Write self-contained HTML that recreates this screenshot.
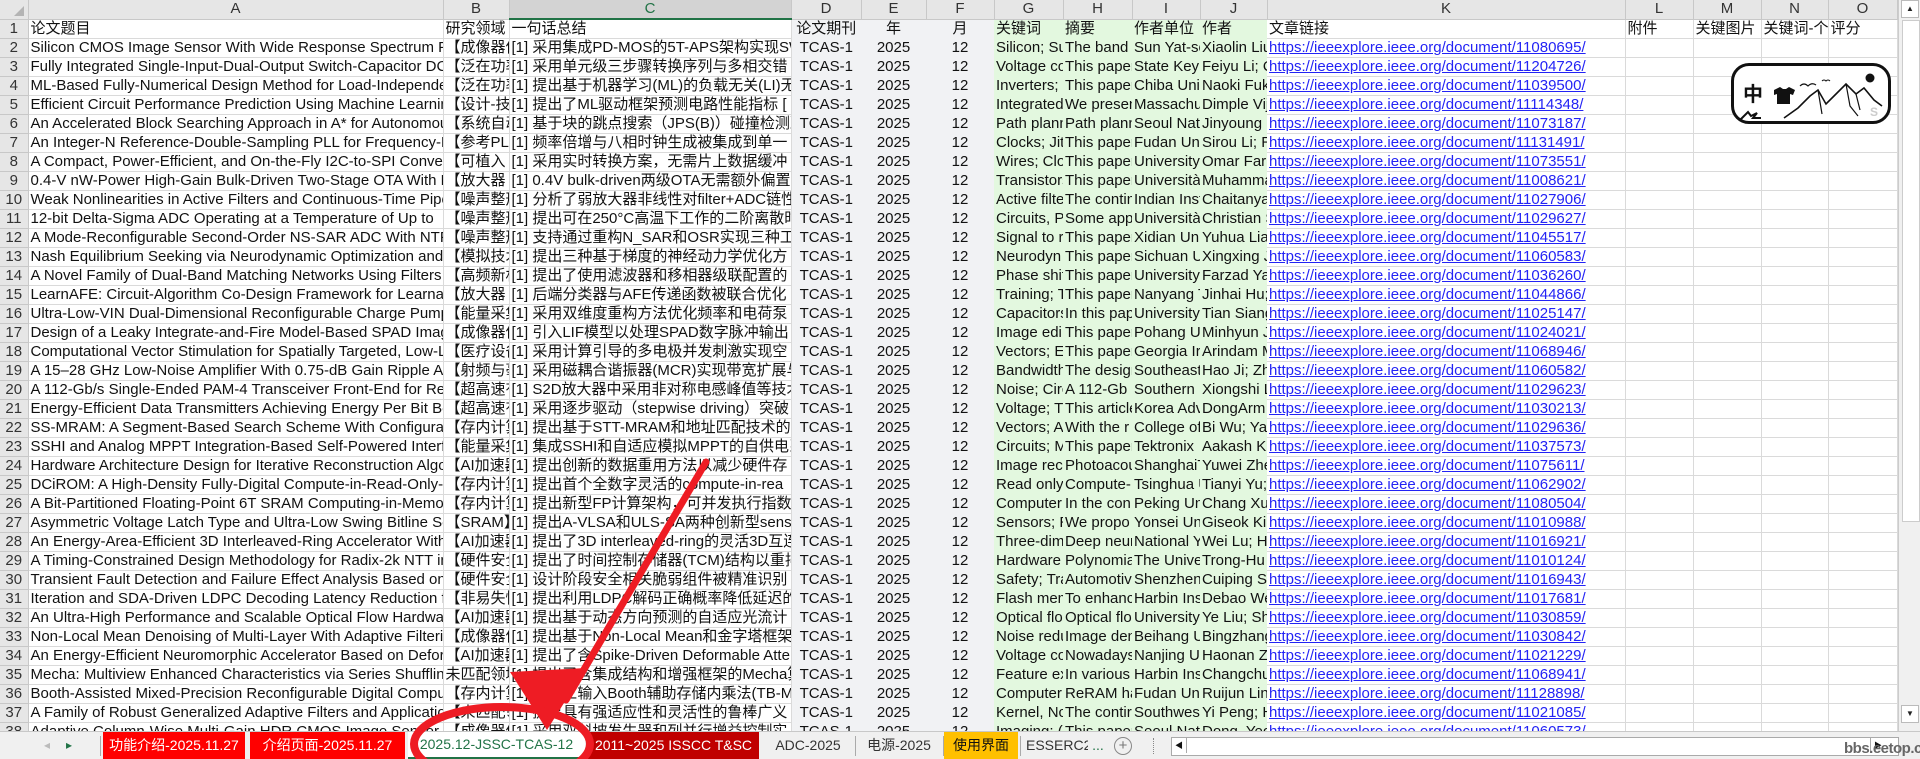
<!DOCTYPE html>
<html><head><meta charset="utf-8">
<style>
html,body{margin:0;padding:0;width:1920px;height:759px;overflow:hidden;background:#fff;}
body{font-family:"Liberation Sans","Noto Sans CJK SC",sans-serif;font-size:15px;color:#111;position:relative;}
table{border-collapse:collapse;table-layout:fixed;position:absolute;left:0;top:0;width:1897px;}
td{height:18px;padding:0 2px;white-space:nowrap;overflow:hidden;border-right:1px solid #dadada;border-bottom:1px solid #dadada;line-height:18px;}
tr.h td{background:#e6e6e6;color:#333;text-align:center;border-color:#c8c8c8;}
tr.h td.sel{background:#d3d3d3;color:#217346;border-bottom:2px solid #217346;}
td.n{background:#e6e6e6;color:#333;text-align:center;border-color:#c8c8c8;padding:0;}
td.d{background:#f1f2f4;border-right:none;border-bottom:1px solid #f1f2f4;text-align:center;}
td.g{background:#e3f8df;border-right:none;border-bottom:1px solid #e3f8df;}
td.k a{color:#2323f5;text-decoration:underline;}
tr.h td.d,tr.h td.g{background:#e6e6e6;border-right:1px solid #c8c8c8;border-bottom:1px solid #c8c8c8;}
#vs{position:absolute;left:1898px;top:0;width:22px;height:731px;background:#f0f0f0;border-left:1px solid #ccc;}
#tabs{position:absolute;left:0;top:731px;width:1920px;height:28px;background:#f0f0f0;border-top:1px solid #c8c8c8;font-size:14px;}
.t{position:absolute;top:0;height:27px;line-height:27px;text-align:center;white-space:nowrap;overflow:hidden;}
.sep{position:absolute;top:4px;width:1px;height:20px;background:#aaa;}
</style></head><body>
<table>
<colgroup><col style="width:28px"><col style="width:415px"><col style="width:66px"><col style="width:282px"><col style="width:70px"><col style="width:65px"><col style="width:68px"><col style="width:69px"><col style="width:69px"><col style="width:68px"><col style="width:67px"><col style="width:358px"><col style="width:68px"><col style="width:68px"><col style="width:67px"><col style="width:69px"></colgroup>
<tr class="h"><td></td><td>A</td><td>B</td><td class="sel">C</td><td class="d">D</td><td class="d">E</td><td class="d">F</td><td class="g">G</td><td class="g">H</td><td class="g">I</td><td class="g">J</td><td>K</td><td>L</td><td>M</td><td>N</td><td>O</td></tr>
<tr><td class="n">1</td><td>论文题目</td><td>研究领域</td><td>一句话总结</td><td class="d">论文期刊</td><td class="d">年</td><td class="d">月</td><td class="g">关键词</td><td class="g">摘要</td><td class="g">作者单位</td><td class="g">作者</td><td>文章链接</td><td>附件</td><td>关键图片</td><td>关键词-个</td><td>评分</td></tr>
<tr><td class="n">2</td><td>Silicon CMOS Image Sensor With Wide Response Spectrum From</td><td>【成像器件</td><td>[1] 采用集成PD-MOS的5T-APS架构实现SW</td><td class="d">TCAS-1</td><td class="d">2025</td><td class="d">12</td><td class="g">Silicon; Su</td><td class="g">The band</td><td class="g">Sun Yat-se</td><td class="g">Xiaolin Liu</td><td class="k"><a>https://ieeexplore.ieee.org/document/11080695/</a></td><td></td><td></td><td></td><td></td></tr>
<tr><td class="n">3</td><td>Fully Integrated Single-Input-Dual-Output Switch-Capacitor DC</td><td>【泛在功率</td><td>[1] 采用单元级三步骤转换序列与多相交错</td><td class="d">TCAS-1</td><td class="d">2025</td><td class="d">12</td><td class="g">Voltage co</td><td class="g">This paper</td><td class="g">State Key</td><td class="g">Feiyu Li; Q</td><td class="k"><a>https://ieeexplore.ieee.org/document/11204726/</a></td><td></td><td></td><td></td><td></td></tr>
<tr><td class="n">4</td><td>ML-Based Fully-Numerical Design Method for Load-Independent</td><td>【泛在功率</td><td>[1] 提出基于机器学习(ML)的负载无关(LI)无</td><td class="d">TCAS-1</td><td class="d">2025</td><td class="d">12</td><td class="g">Inverters; </td><td class="g">This paper</td><td class="g">Chiba Univ</td><td class="g">Naoki Fuk</td><td class="k"><a>https://ieeexplore.ieee.org/document/11039500/</a></td><td></td><td></td><td></td><td></td></tr>
<tr><td class="n">5</td><td>Efficient Circuit Performance Prediction Using Machine Learning:</td><td>【设计-技</td><td>[1] 提出了ML驱动框架预测电路性能指标 [</td><td class="d">TCAS-1</td><td class="d">2025</td><td class="d">12</td><td class="g">Integrated</td><td class="g">We presen</td><td class="g">Massachus</td><td class="g">Dimple Vij</td><td class="k"><a>https://ieeexplore.ieee.org/document/11114348/</a></td><td></td><td></td><td></td><td></td></tr>
<tr><td class="n">6</td><td>An Accelerated Block Searching Approach in A* for Autonomous</td><td>【系统自动</td><td>[1] 基于块的跳点搜索（JPS(B)）碰撞检测减</td><td class="d">TCAS-1</td><td class="d">2025</td><td class="d">12</td><td class="g">Path plann</td><td class="g">Path plann</td><td class="g">Seoul Nat</td><td class="g">Jinyoung S</td><td class="k"><a>https://ieeexplore.ieee.org/document/11073187/</a></td><td></td><td></td><td></td><td></td></tr>
<tr><td class="n">7</td><td>An Integer-N Reference-Double-Sampling PLL for Frequency-M</td><td>【参考PLL</td><td>[1] 频率倍增与八相时钟生成被集成到单一</td><td class="d">TCAS-1</td><td class="d">2025</td><td class="d">12</td><td class="g">Clocks; Jitt</td><td class="g">This paper</td><td class="g">Fudan Uni</td><td class="g">Sirou Li; R</td><td class="k"><a>https://ieeexplore.ieee.org/document/11131491/</a></td><td></td><td></td><td></td><td></td></tr>
<tr><td class="n">8</td><td>A Compact, Power-Efficient, and On-the-Fly I2C-to-SPI Conver</td><td>【可植入</td><td>[1] 采用实时转换方案，无需片上数据缓冲</td><td class="d">TCAS-1</td><td class="d">2025</td><td class="d">12</td><td class="g">Wires; Clo</td><td class="g">This paper</td><td class="g">University</td><td class="g">Omar Faru</td><td class="k"><a>https://ieeexplore.ieee.org/document/11073551/</a></td><td></td><td></td><td></td><td></td></tr>
<tr><td class="n">9</td><td>0.4-V nW-Power High-Gain Bulk-Driven Two-Stage OTA With N</td><td>【放大器</td><td>[1] 0.4V bulk-driven两级OTA无需额外偏置</td><td class="d">TCAS-1</td><td class="d">2025</td><td class="d">12</td><td class="g">Transistors</td><td class="g">This paper</td><td class="g">Università</td><td class="g">Muhamma</td><td class="k"><a>https://ieeexplore.ieee.org/document/11008621/</a></td><td></td><td></td><td></td><td></td></tr>
<tr><td class="n">10</td><td>Weak Nonlinearities in Active Filters and Continuous-Time Pipel</td><td>【噪声整形</td><td>[1] 分析了弱放大器非线性对filter+ADC链性</td><td class="d">TCAS-1</td><td class="d">2025</td><td class="d">12</td><td class="g">Active filte</td><td class="g">The contin</td><td class="g">Indian Inst</td><td class="g">Chaitanya</td><td class="k"><a>https://ieeexplore.ieee.org/document/11027906/</a></td><td></td><td></td><td></td><td></td></tr>
<tr><td class="n">11</td><td>12-bit Delta-Sigma ADC Operating at a Temperature of Up to</td><td>【噪声整形</td><td>[1] 提出可在250°C高温下工作的二阶离散时</td><td class="d">TCAS-1</td><td class="d">2025</td><td class="d">12</td><td class="g">Circuits, Po</td><td class="g">Some app</td><td class="g">Università</td><td class="g">Christian S</td><td class="k"><a>https://ieeexplore.ieee.org/document/11029627/</a></td><td></td><td></td><td></td><td></td></tr>
<tr><td class="n">12</td><td>A Mode-Reconfigurable Second-Order NS-SAR ADC With NTF</td><td>【噪声整形</td><td>[1] 支持通过重构N_SAR和OSR实现三种工作</td><td class="d">TCAS-1</td><td class="d">2025</td><td class="d">12</td><td class="g">Signal to r</td><td class="g">This paper</td><td class="g">Xidian Uni</td><td class="g">Yuhua Lian</td><td class="k"><a>https://ieeexplore.ieee.org/document/11045517/</a></td><td></td><td></td><td></td><td></td></tr>
<tr><td class="n">13</td><td>Nash Equilibrium Seeking via Neurodynamic Optimization and A</td><td>【模拟技术</td><td>[1] 提出三种基于梯度的神经动力学优化方</td><td class="d">TCAS-1</td><td class="d">2025</td><td class="d">12</td><td class="g">Neurodyn</td><td class="g">This paper</td><td class="g">Sichuan U</td><td class="g">Xingxing J</td><td class="k"><a>https://ieeexplore.ieee.org/document/11060583/</a></td><td></td><td></td><td></td><td></td></tr>
<tr><td class="n">14</td><td>A Novel Family of Dual-Band Matching Networks Using Filters a</td><td>【高频新材</td><td>[1] 提出了使用滤波器和移相器级联配置的</td><td class="d">TCAS-1</td><td class="d">2025</td><td class="d">12</td><td class="g">Phase shift</td><td class="g">This paper</td><td class="g">University</td><td class="g">Farzad Ya</td><td class="k"><a>https://ieeexplore.ieee.org/document/11036260/</a></td><td></td><td></td><td></td><td></td></tr>
<tr><td class="n">15</td><td>LearnAFE: Circuit-Algorithm Co-Design Framework for Learnab</td><td>【放大器</td><td>[1] 后端分类器与AFE传递函数被联合优化</td><td class="d">TCAS-1</td><td class="d">2025</td><td class="d">12</td><td class="g">Training; T</td><td class="g">This paper</td><td class="g">Nanyang T</td><td class="g">Jinhai Hu; </td><td class="k"><a>https://ieeexplore.ieee.org/document/11044866/</a></td><td></td><td></td><td></td><td></td></tr>
<tr><td class="n">16</td><td>Ultra-Low-VIN Dual-Dimensional Reconfigurable Charge Pump</td><td>【能量采集</td><td>[1] 采用双维度重构方法优化频率和电荷泵</td><td class="d">TCAS-1</td><td class="d">2025</td><td class="d">12</td><td class="g">Capacitors</td><td class="g">In this pap</td><td class="g">University</td><td class="g">Tian Siang</td><td class="k"><a>https://ieeexplore.ieee.org/document/11025147/</a></td><td></td><td></td><td></td><td></td></tr>
<tr><td class="n">17</td><td>Design of a Leaky Integrate-and-Fire Model-Based SPAD Imag</td><td>【成像器件</td><td>[1] 引入LIF模型以处理SPAD数字脉冲输出</td><td class="d">TCAS-1</td><td class="d">2025</td><td class="d">12</td><td class="g">Image edi</td><td class="g">This paper</td><td class="g">Pohang U</td><td class="g">Minhyun J</td><td class="k"><a>https://ieeexplore.ieee.org/document/11024021/</a></td><td></td><td></td><td></td><td></td></tr>
<tr><td class="n">18</td><td>Computational Vector Stimulation for Spatially Targeted, Low-L</td><td>【医疗设备</td><td>[1] 采用计算引导的多电极并发刺激实现空</td><td class="d">TCAS-1</td><td class="d">2025</td><td class="d">12</td><td class="g">Vectors; E</td><td class="g">This paper</td><td class="g">Georgia Ir</td><td class="g">Arindam M</td><td class="k"><a>https://ieeexplore.ieee.org/document/11068946/</a></td><td></td><td></td><td></td><td></td></tr>
<tr><td class="n">19</td><td>A 15–28 GHz Low-Noise Amplifier With 0.75-dB Gain Ripple A</td><td>【射频与毫</td><td>[1] 采用磁耦合谐振器(MCR)实现带宽扩展与</td><td class="d">TCAS-1</td><td class="d">2025</td><td class="d">12</td><td class="g">Bandwidth</td><td class="g">The design</td><td class="g">Southeast</td><td class="g">Hao Ji; Zhi</td><td class="k"><a>https://ieeexplore.ieee.org/document/11060582/</a></td><td></td><td></td><td></td><td></td></tr>
<tr><td class="n">20</td><td>A 112-Gb/s Single-Ended PAM-4 Transceiver Front-End for Re</td><td>【超高速有</td><td>[1] S2D放大器中采用非对称电感峰值等技术</td><td class="d">TCAS-1</td><td class="d">2025</td><td class="d">12</td><td class="g">Noise; Circ</td><td class="g">A 112-Gb</td><td class="g">Southern U</td><td class="g">Xiongshi L</td><td class="k"><a>https://ieeexplore.ieee.org/document/11029623/</a></td><td></td><td></td><td></td><td></td></tr>
<tr><td class="n">21</td><td>Energy-Efficient Data Transmitters Achieving Energy Per Bit Bey</td><td>【超高速有</td><td>[1] 采用逐步驱动（stepwise driving）突破</td><td class="d">TCAS-1</td><td class="d">2025</td><td class="d">12</td><td class="g">Voltage; T</td><td class="g">This article</td><td class="g">Korea Adv</td><td class="g">DongArm</td><td class="k"><a>https://ieeexplore.ieee.org/document/11030213/</a></td><td></td><td></td><td></td><td></td></tr>
<tr><td class="n">22</td><td>SS-MRAM: A Segment-Based Search Scheme With Configurabl</td><td>【存内计算</td><td>[1] 提出基于STT-MRAM和地址匹配技术的</td><td class="d">TCAS-1</td><td class="d">2025</td><td class="d">12</td><td class="g">Vectors; A</td><td class="g">With the r</td><td class="g">College of</td><td class="g">Bi Wu; Yar</td><td class="k"><a>https://ieeexplore.ieee.org/document/11029636/</a></td><td></td><td></td><td></td><td></td></tr>
<tr><td class="n">23</td><td>SSHI and Analog MPPT Integration-Based Self-Powered Interfa</td><td>【能量采集</td><td>[1] 集成SSHI和自适应模拟MPPT的自供电系</td><td class="d">TCAS-1</td><td class="d">2025</td><td class="d">12</td><td class="g">Circuits; M</td><td class="g">This paper</td><td class="g">Tektronix</td><td class="g">Aakash Ku</td><td class="k"><a>https://ieeexplore.ieee.org/document/11037573/</a></td><td></td><td></td><td></td><td></td></tr>
<tr><td class="n">24</td><td>Hardware Architecture Design for Iterative Reconstruction Algo</td><td>【AI加速器</td><td>[1] 提出创新的数据重用方法以减少硬件存</td><td class="d">TCAS-1</td><td class="d">2025</td><td class="d">12</td><td class="g">Image rec</td><td class="g">Photoacou</td><td class="g">ShanghaiT</td><td class="g">Yuwei Zhe</td><td class="k"><a>https://ieeexplore.ieee.org/document/11075611/</a></td><td></td><td></td><td></td><td></td></tr>
<tr><td class="n">25</td><td>DCiROM: A High-Density Fully-Digital Compute-in-Read-Only-</td><td>【存内计算</td><td>[1] 提出首个全数字灵活的compute-in-rea</td><td class="d">TCAS-1</td><td class="d">2025</td><td class="d">12</td><td class="g">Read only</td><td class="g">Compute-</td><td class="g">Tsinghua U</td><td class="g">Tianyi Yu; T</td><td class="k"><a>https://ieeexplore.ieee.org/document/11062902/</a></td><td></td><td></td><td></td><td></td></tr>
<tr><td class="n">26</td><td>A Bit-Partitioned Floating-Point 6T SRAM Computing-in-Memo</td><td>【存内计算</td><td>[1] 提出新型FP计算架构，可并发执行指数</td><td class="d">TCAS-1</td><td class="d">2025</td><td class="d">12</td><td class="g">Computer</td><td class="g">In the con</td><td class="g">Peking Un</td><td class="g">Chang Xu</td><td class="k"><a>https://ieeexplore.ieee.org/document/11080504/</a></td><td></td><td></td><td></td><td></td></tr>
<tr><td class="n">27</td><td>Asymmetric Voltage Latch Type and Ultra-Low Swing Bitline Se</td><td>【SRAM】</td><td>[1] 提出A-VLSA和ULS-SA两种创新型sense</td><td class="d">TCAS-1</td><td class="d">2025</td><td class="d">12</td><td class="g">Sensors; R</td><td class="g">We propo</td><td class="g">Yonsei Un</td><td class="g">Giseok Kin</td><td class="k"><a>https://ieeexplore.ieee.org/document/11010988/</a></td><td></td><td></td><td></td><td></td></tr>
<tr><td class="n">28</td><td>An Energy-Area-Efficient 3D Interleaved-Ring Accelerator With</td><td>【AI加速器</td><td>[1] 提出了3D interleaved-ring的灵活3D互连</td><td class="d">TCAS-1</td><td class="d">2025</td><td class="d">12</td><td class="g">Three-dim</td><td class="g">Deep neur</td><td class="g">National Y</td><td class="g">Wei Lu; Hu</td><td class="k"><a>https://ieeexplore.ieee.org/document/11016921/</a></td><td></td><td></td><td></td><td></td></tr>
<tr><td class="n">29</td><td>A Timing-Constrained Design Methodology for Radix-2k NTT in</td><td>【硬件安全</td><td>[1] 提出了时间控制存储器(TCM)结构以重排</td><td class="d">TCAS-1</td><td class="d">2025</td><td class="d">12</td><td class="g">Hardware</td><td class="g">Polynomia</td><td class="g">The Unive</td><td class="g">Trong-Hu</td><td class="k"><a>https://ieeexplore.ieee.org/document/11010124/</a></td><td></td><td></td><td></td><td></td></tr>
<tr><td class="n">30</td><td>Transient Fault Detection and Failure Effect Analysis Based on De</td><td>【硬件安全</td><td>[1] 设计阶段安全相关脆弱组件被精准识别</td><td class="d">TCAS-1</td><td class="d">2025</td><td class="d">12</td><td class="g">Safety; Tra</td><td class="g">Automotiv</td><td class="g">Shenzhen</td><td class="g">Cuiping Sh</td><td class="k"><a>https://ieeexplore.ieee.org/document/11016943/</a></td><td></td><td></td><td></td><td></td></tr>
<tr><td class="n">31</td><td>Iteration and SDA-Driven LDPC Decoding Latency Reduction fo</td><td>【非易失性</td><td>[1] 提出利用LDPC解码正确概率降低延迟的</td><td class="d">TCAS-1</td><td class="d">2025</td><td class="d">12</td><td class="g">Flash mem</td><td class="g">To enhanc</td><td class="g">Harbin Ins</td><td class="g">Debao We</td><td class="k"><a>https://ieeexplore.ieee.org/document/11017681/</a></td><td></td><td></td><td></td><td></td></tr>
<tr><td class="n">32</td><td>An Ultra-High Performance and Scalable Optical Flow Hardwar</td><td>【AI加速器</td><td>[1] 提出基于动态方向预测的自适应光流计</td><td class="d">TCAS-1</td><td class="d">2025</td><td class="d">12</td><td class="g">Optical flo</td><td class="g">Optical flo</td><td class="g">University</td><td class="g">Ye Liu; Shu</td><td class="k"><a>https://ieeexplore.ieee.org/document/11030859/</a></td><td></td><td></td><td></td><td></td></tr>
<tr><td class="n">33</td><td>Non-Local Mean Denoising of Multi-Layer With Adaptive Filteri</td><td>【成像器件</td><td>[1] 提出基于Non-Local Mean和金字塔框架</td><td class="d">TCAS-1</td><td class="d">2025</td><td class="d">12</td><td class="g">Noise redu</td><td class="g">Image den</td><td class="g">Beihang U</td><td class="g">Bingzhang</td><td class="k"><a>https://ieeexplore.ieee.org/document/11030842/</a></td><td></td><td></td><td></td><td></td></tr>
<tr><td class="n">34</td><td>An Energy-Efficient Neuromorphic Accelerator Based on Deforr</td><td>【AI加速器</td><td>[1] 提出了含Spike-Driven Deformable Atte</td><td class="d">TCAS-1</td><td class="d">2025</td><td class="d">12</td><td class="g">Voltage co</td><td class="g">Nowadays</td><td class="g">Nanjing U</td><td class="g">Haonan Z</td><td class="k"><a>https://ieeexplore.ieee.org/document/11021229/</a></td><td></td><td></td><td></td><td></td></tr>
<tr><td class="n">35</td><td>Mecha: Multiview Enhanced Characteristics via Series Shuffling fo</td><td>未匹配领域</td><td>[1] 提出了含集成结构和增强框架的Mecha算</td><td class="d">TCAS-1</td><td class="d">2025</td><td class="d">12</td><td class="g">Feature ex</td><td class="g">In various</td><td class="g">Harbin Ins</td><td class="g">Changchu</td><td class="k"><a>https://ieeexplore.ieee.org/document/11068941/</a></td><td></td><td></td><td></td><td></td></tr>
<tr><td class="n">36</td><td>Booth-Assisted Mixed-Precision Reconfigurable Digital Comput</td><td>【存内计算</td><td>[1] 采用三输入Booth辅助存储内乘法(TB-M</td><td class="d">TCAS-1</td><td class="d">2025</td><td class="d">12</td><td class="g">Computer</td><td class="g">ReRAM ha</td><td class="g">Fudan Uni</td><td class="g">Ruijun Lin;</td><td class="k"><a>https://ieeexplore.ieee.org/document/11128898/</a></td><td></td><td></td><td></td><td></td></tr>
<tr><td class="n">37</td><td>A Family of Robust Generalized Adaptive Filters and Applicatio</td><td>【未匹配领</td><td>[1] 提出具有强适应性和灵活性的鲁棒广义</td><td class="d">TCAS-1</td><td class="d">2025</td><td class="d">12</td><td class="g">Kernel, Nc</td><td class="g">The contir</td><td class="g">Southwest</td><td class="g">Yi Peng; H</td><td class="k"><a>https://ieeexplore.ieee.org/document/11021085/</a></td><td></td><td></td><td></td><td></td></tr>
<tr><td class="n">38</td><td>Adaptive Column-Wise Multi-Gain HDR CMOS Image Sensor fo</td><td>【成像器件</td><td>[1] 采用双斜坡发生器和列并行增益控制实</td><td class="d">TCAS-1</td><td class="d">2025</td><td class="d">12</td><td class="g">Imaging; (</td><td class="g">This paper</td><td class="g">Seoul Nat</td><td class="g">Dong, Yeo</td><td class="k"><a>https://ieeexplore.ieee.org/document/11060573/</a></td><td></td><td></td><td></td><td></td></tr>
</table>

<div style="position:absolute;left:0;top:0;width:28px;height:18px;background:#e6e6e6;"></div>
<svg style="position:absolute;left:14px;top:6px" width="11" height="11"><polygon points="10,0 10,10 0,10" fill="#b4b4b4"/></svg>

<div id="vs">
  <div style="position:absolute;left:2px;top:0;width:18px;height:18px;background:#fff;border:1px solid #bbb;box-sizing:border-box;font-size:8px;text-align:center;line-height:16px;color:#222">▲</div>
  <div style="position:absolute;left:3px;top:20px;width:16px;height:500px;background:#fff;border:1px solid #ccc;"></div>
  <div style="position:absolute;left:2px;top:705px;width:18px;height:18px;background:#fff;border:1px solid #bbb;box-sizing:border-box;font-size:8px;text-align:center;line-height:16px;color:#222">▼</div>
</div>

<div style="position:absolute;left:1731px;top:63px;width:160px;height:61px;border:3px solid #111;border-radius:18px;background:#fff;box-sizing:border-box;">
  <div style="position:absolute;left:9px;top:16px;font-size:20px;font-weight:bold;font-family:'Noto Sans CJK SC',sans-serif;line-height:22px;">中</div>
  <svg style="position:absolute;left:0;top:0" width="155" height="56" viewBox="0 0 155 56">
    <path d="M40 24 l6 -3 l3 2 l3 0 l3 -2 l6 3 l-2 5 l-3 -1 l0 10 l-13 0 l0 -10 l-3 1z" fill="#111"/>
    <path d="M66 20 q4 -4 8 0 q4 -4 8 -1" stroke="#111" fill="none" stroke-width="1.2"/>
    <path d="M88 15 q2 -2 4 0 q2 -2 4 0" stroke="#111" fill="none" stroke-width="1"/>
    <path d="M50 52 L64 42 L76 30 L84 24 L92 38 L100 30 L112 18 L122 28 L130 22 L140 34 L148 40" stroke="#111" fill="none" stroke-width="1.6"/>
    <path d="M84 24 L88 48 M112 18 L116 40 L124 50 M122 28 L126 44" stroke="#111" fill="none" stroke-width="1.2"/>
    <circle cx="136" cy="12" r="4.5" fill="#111"/>
    <path d="M6 54 l8 -8 l3 4 l6 -3 l-4 5 l8 0" stroke="#111" fill="none" stroke-width="2"/>
    <text x="136" y="50" font-size="12" font-weight="bold" fill="#ccc" font-family="Liberation Sans">S</text>
  </svg>
</div>

<div id="tabs">
  <div class="t" style="left:40px;width:14px;color:#bbb;font-size:12px">◂</div>
  <div class="t" style="left:62px;width:14px;color:#217346;font-size:12px">▸</div>
  <div class="sep" style="left:100px"></div>
  <div class="t" style="left:103px;width:142px;background:#ff0000;color:#fff">功能介绍-2025.11.27</div>
  <div class="t" style="left:250px;width:155px;background:#ff0000;color:#fff">介绍页面-2025.11.27</div>
  <div class="t" style="left:408px;width:177px;background:#fff;color:#217346;border-bottom:2px solid #217346;height:25px;line-height:25px">2025.12-JSSC-TCAS-12</div>
  <div class="t" style="left:588px;width:171px;background:#c00000;color:#fff">2011~2025 ISSCC T&amp;SC</div>
  <div class="t" style="left:762px;width:92px;color:#333">ADC-2025</div>
  <div class="sep" style="left:855px"></div>
  <div class="t" style="left:856px;width:86px;color:#333">电源-2025</div>
  <div class="sep" style="left:943px"></div>
  <div class="t" style="left:944px;width:74px;background:#ffc000;color:#111">使用界面</div>
  <div class="sep" style="left:1020px"></div>
  <div class="t" style="left:1026px;width:62px;color:#333">ESSERC2</div>
  <div class="t" style="left:1090px;width:16px;color:#217346">...</div>
  <div style="position:absolute;left:1114px;top:5px;width:16px;height:16px;border:1.5px solid #888;border-radius:50%;color:#777;text-align:center;line-height:15px;font-size:15px;">+</div>
  <div style="position:absolute;left:1153px;top:6px;width:1px;height:16px;border-left:1px dotted #888"></div>
  <div style="position:absolute;left:1171px;top:5px;width:726px;height:17px;background:#fff;border:1px solid #aaa;"></div>
  <div style="position:absolute;left:1172px;top:6px;width:14px;height:15px;border-right:1px solid #aaa;font-size:8px;text-align:center;line-height:15px">◀</div>
  <div style="position:absolute;left:1870px;top:6px;width:14px;height:15px;border-left:1px solid #aaa;font-size:8px;text-align:center;line-height:15px">▶</div>
  <div style="position:absolute;left:1844px;top:8px;font-size:15px;font-weight:bold;color:#666;letter-spacing:-0.5px">bbs.eetop.cn</div>
</div>

<svg style="position:absolute;left:0;top:0" width="1920" height="759">
  <path d="M706 462 L566 700" stroke="#ee1c24" stroke-width="7" stroke-linecap="round" fill="none"/>
  <polygon points="547,730 510,672 586,668" fill="#ee1c24"/>
  <ellipse cx="502" cy="744" rx="88" ry="37" stroke="#ee1c24" stroke-width="8" fill="none"/>
</svg>
</body></html>
